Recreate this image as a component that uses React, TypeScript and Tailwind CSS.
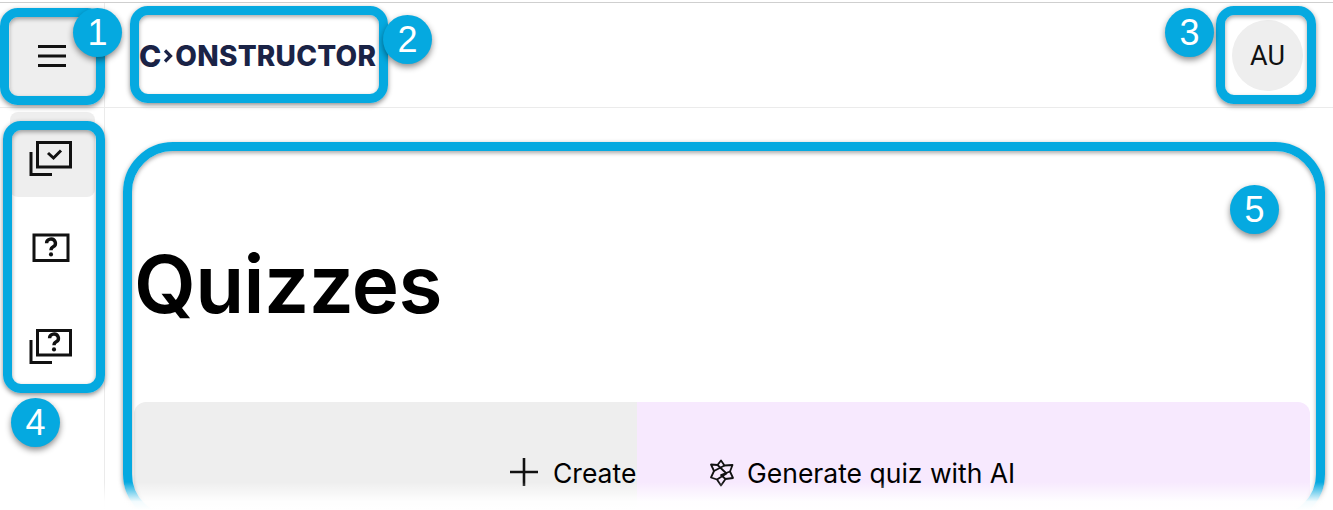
const Box = ({ className }: { className: string }) => (
  <div className={`absolute border-[9px] border-[#05a9e0] shadow-[0_2px_5px_rgba(0,0,0,0.45),inset_0_2px_4px_rgba(0,0,0,0.35)] ${className}`} />
);

const Badge = ({ n, className }: { n: number; className: string }) => (
  <div className={`absolute flex h-[49px] w-[49px] items-center justify-center rounded-full bg-[#05a9e0] text-[36px] leading-none text-white shadow-[0_3px_6px_rgba(0,0,0,0.45)] font-['Liberation_Sans',sans-serif] ${className}`}>
    {n}
  </div>
);

const Q = ({ x, y }: { x: number; y: number }) => (
  <g transform={`translate(${x} ${y}) scale(0.74)`}>
    <path d="M-6 -5 A6 5.6 0 1 1 3 -0.2 C0.8 1 0 1.8 0 4.5" fill="none" stroke="#111" strokeWidth="4.6" />
    <circle cx="0" cy="10" r="2.8" fill="#111" />
  </g>
);

export default function App() {
  return (
    <div className="relative flex h-[510px] w-[1333px] flex-col overflow-hidden bg-white pt-[2px] font-['Inter',sans-serif]">
      <header className="flex h-[106px] shrink-0 items-stretch border-t border-b border-t-[#cfcfcf] border-b-[#ebebeb]">
        <div className="flex w-[105px] shrink-0 items-center border-r border-[#ebebeb] pl-[10px]">
          <button className="mt-[2px] flex h-[79px] w-[86px] items-center justify-center rounded-lg bg-[#eeeeee] pr-[3px]">
            <svg width="30" height="24" viewBox="0 0 30 24" stroke="#111" strokeWidth="2.8">
              <path d="M1 2.5H29M1 12H29M1 21.5H29" />
            </svg>
          </button>
        </div>
        <div className="flex flex-1 items-center pl-[34px] pt-[2px] text-[28px] leading-none font-extrabold text-[#1a2346]">
          <span className="text-[30px]">C</span>
          <svg width="10" height="14" viewBox="0 0 10 14" fill="none" stroke="#1a2346" strokeWidth="3.2" className="ml-[2px] mr-[2px] shrink-0">
            <path d="M2 1.5L7.5 7L2 12.5" />
          </svg>
          <span className="tracking-[0.25px]">ONSTRUCTOR</span>
        </div>
        <div className="flex items-center pr-[30px]">
          <div className="flex h-[71px] w-[71px] items-center justify-center rounded-full bg-[#eeeeee] pt-[2px] text-[27px] text-[#111] font-['Roboto',sans-serif]">AU</div>
        </div>
      </header>
      <div className="flex flex-1">
        <aside className="flex w-[105px] shrink-0 flex-col border-r border-[#ebebeb] pl-[10px] pt-[4px]">
          <div className="flex h-[85px] w-[85px] items-start justify-center rounded-lg bg-[#eeeeee] pr-[3px] pt-[28px]">
            <svg width="44" height="36" viewBox="0 0 44 36" fill="none" stroke="#111" strokeWidth="3">
              <path d="M8.5 2.5H41.5V27H8.5Z" />
              <path d="M2 12V34.5H23" />
              <path d="M19 13L24.5 18L32 10.5" />
            </svg>
          </div>
          <div className="flex h-[96px] w-[85px] items-center justify-center pr-[3px] pt-[6px]">
            <svg width="38" height="30" viewBox="0 0 38 30" fill="none" stroke="#111" strokeWidth="3">
              <path d="M2 2H36V27.5H2Z" />
              <g stroke="none"><Q x={19} y={14} /></g>
            </svg>
          </div>
          <div className="flex h-[96px] w-[85px] items-center justify-center pr-[3px] pt-[10px]">
            <svg width="44" height="36" viewBox="0 0 44 36" fill="none" stroke="#111" strokeWidth="3">
              <path d="M8.5 2.5H41.5V27H8.5Z" />
              <path d="M2 12V34.5H23" />
              <g stroke="none"><Q x={25} y={14} /></g>
            </svg>
          </div>
        </aside>
        <main className="flex-1 pl-[29px] pr-[23px] pt-[128px]">
          <h1 className="text-[80px] leading-[96px] font-semibold tracking-[-0.6px] text-black">Quizzes</h1>
          <div className="mt-[70px] flex h-[142px] overflow-hidden rounded-xl">
            <div className="flex w-[503px] shrink-0 items-start gap-[13px] overflow-hidden bg-[#eeeeee] pl-[374px] pt-[53px]">
              <svg width="32" height="32" viewBox="0 0 32 32" className="mt-[1px] shrink-0" stroke="#111" strokeWidth="2.6">
                <path d="M2 16H30M16 2V30" />
              </svg>
              <span className="text-[26.5px] leading-[36px] whitespace-nowrap text-black">Create</span>
            </div>
            <div className="flex flex-1 items-start gap-[12px] bg-[#f7e9fe] pl-[72px] pt-[53px]">
              <svg width="26" height="28" viewBox="0 0 26 28" className="mt-[4px] shrink-0" fill="none" stroke="#111" strokeWidth="1.8" strokeLinejoin="round">
                <path d="M12 1.5L15.5 6.5L23.5 6L21 12.5L24 19L16.5 20L12 26.5L8 20.5L2 18.5L5 12L2 5.5L8.5 6Z" />
                <path d="M8.5 6L17.5 14.5L8 20.5M15.5 6.5L5 12M21 12.5L12 16L16.5 20" />
              </svg>
              <span className="text-[26.5px] leading-[36px] whitespace-nowrap text-black">Generate quiz with AI</span>
            </div>
          </div>
        </main>
      </div>

      <Box className="left-0 top-[8px] h-[97px] w-[105px] rounded-[18px]" />
      <Box className="left-[130px] top-[6px] h-[97px] w-[258px] rounded-[18px]" />
      <Box className="left-[1216px] top-[6px] h-[98px] w-[100px] rounded-[18px]" />
      <Box className="left-[3px] top-[121px] h-[272px] w-[102px] rounded-[18px]" />
      <Box className="left-[123px] top-[142px] h-[382px] w-[1202px] rounded-[50px]" />
      <Badge n={1} className="left-[73px] top-[8px]" />
      <Badge n={2} className="left-[383px] top-[15px]" />
      <Badge n={3} className="left-[1165px] top-[8px]" />
      <Badge n={4} className="left-[11px] top-[398px]" />
      <Badge n={5} className="left-[1230px] top-[185px]" />
      <div className="absolute inset-x-0 bottom-0 h-[28px] bg-gradient-to-b from-white/0 via-white/95 via-70% to-white" />
    </div>
  );
}
